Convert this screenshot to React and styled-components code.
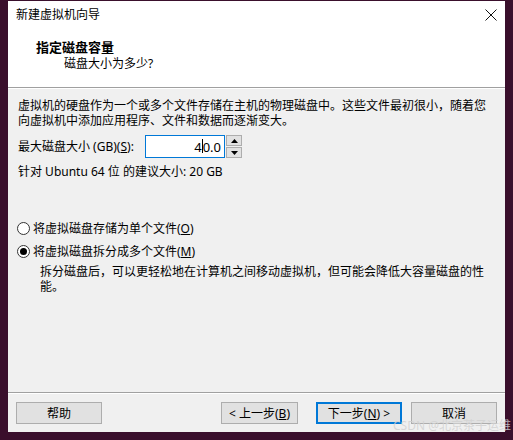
import React from "react";
import styled, { createGlobalStyle } from "styled-components";

const Global = createGlobalStyle`
  html, body { margin: 0; padding: 0; }
  body {
    background: #3a0f2c;
    font-family: "Noto Sans", "Noto Sans CJK SC", sans-serif;
    color: #000;
  }
`;

const Page = styled.div`
  position: relative;
  width: 513px;
  height: 440px;
  padding: 1px 8px 0 8px;
  box-sizing: border-box;
  overflow: hidden;
`;

const Window = styled.div`
  width: 497px;
  height: 431px;
  display: flex;
  flex-direction: column;
  background: #f0f0f0;
  font-size: 12px;
`;

const TitleBar = styled.div`
  height: 28px;
  background: #fff;
  display: flex;
  align-items: center;
  justify-content: space-between;
  padding: 0 8px 0 8px;
`;

const TitleText = styled.span`
  font-size: 12px;
  line-height: 16px;
`;

const Header = styled.div`
  background: #fff;
  height: 59px;
  box-sizing: border-box;
  padding: 9px 0 0 28px;
  border-bottom: 1px solid #a0a0a0;
`;

const HeaderTitle = styled.div`
  font-size: 13px;
  font-weight: bold;
  line-height: 18px;
`;

const HeaderSub = styled.div`
  font-size: 12px;
  line-height: 15px;
  padding-left: 28px;
`;

const Body = styled.div`
  flex: 1;
  padding: 9px 10px 0 10px;
  border-top: 1px solid #fff;
  display: flex;
  flex-direction: column;
`;

const Text = styled.div`
  line-height: 15px;
  margin-top: ${(p) => p.$mt || 0}px;
  margin-left: ${(p) => p.$ml || 0}px;
  white-space: pre;
`;

const Key = styled.span`
  text-decoration: underline;
  text-underline-offset: 1px;
`;

const SizeRow = styled.div`
  display: flex;
  align-items: center;
  margin-top: 7px;
  height: 23px;
`;

const Label = styled.span`
  line-height: 15px;
  width: 127px;
  white-space: nowrap;
`;

const Input = styled.div`
  width: 80px;
  height: 23px;
  box-sizing: border-box;
  border: 1px solid #0078d7;
  background: #fff;
  display: flex;
  align-items: center;
  justify-content: flex-end;
  padding-right: 3px;
  font-size: 13px;
`;

const Caret = styled.span`
  display: inline-block;
  width: 1px;
  height: 14px;
  background: #000;
  vertical-align: middle;
  margin: 0 0 1px 0;
`;

const Spinner = styled.div`
  margin-left: 1px;
  width: 16px;
  height: 23px;
  display: flex;
  flex-direction: column;
  gap: 1px;
`;

const SpinBtn = styled.div`
  flex: 1;
  border: 1px solid #adadad;
  background: #e1e1e1;
  display: flex;
  align-items: center;
  justify-content: center;
`;

const RadioRow = styled.div`
  display: flex;
  align-items: center;
  height: 18px;
  margin-top: ${(p) => p.$mt}px;
  margin-left: -1px;
`;

const RadioCircle = styled.span`
  width: 13px;
  height: 13px;
  box-sizing: border-box;
  border: 1px solid #333;
  border-radius: 50%;
  background: #fff;
  display: flex;
  align-items: center;
  justify-content: center;
  margin-right: 3px;
  &::after {
    content: "";
    width: 7px;
    height: 7px;
    border-radius: 50%;
    background: ${(p) => (p.$checked ? "#000" : "transparent")};
  }
`;

const Footer = styled.div`
  border-top: 1px solid #a0a0a0;
  box-shadow: inset 0 1px 0 #fff;
  padding: 9px 8px 8px 8px;
  display: flex;
  align-items: center;
`;

const Button = styled.div`
  width: ${(p) => p.$w || 86}px;
  height: 22px;
  box-sizing: border-box;
  border: ${(p) => (p.$default ? "2px solid #0078d7" : "1px solid #adadad")};
  background: #e1e1e1;
  display: flex;
  align-items: center;
  justify-content: center;
  font-size: 12px;
  margin-left: ${(p) => p.$ml || 0}px;
  white-space: nowrap;
`;

const Spacer = styled.div`
  flex: 1;
`;

const Watermark = styled.div`
  position: absolute;
  right: 2px;
  bottom: 7px;
  font-size: 12px;
  line-height: 14px;
  color: rgba(210, 210, 210, 0.85);
  font-family: "Noto Sans", "Noto Sans CJK SC", sans-serif;
`;

export default function App() {
  return (
    <Page>
      <Global />
      <Window>
        <TitleBar>
          <TitleText>新建虚拟机向导</TitleText>
          <svg width="12" height="12" viewBox="0 0 12 12">
            <path d="M0.5 0.5 L11.5 11.5 M11.5 0.5 L0.5 11.5" stroke="#111" strokeWidth="1" />
          </svg>
        </TitleBar>
        <Header>
          <HeaderTitle>指定磁盘容量</HeaderTitle>
          <HeaderSub>磁盘大小为多少?</HeaderSub>
        </Header>
        <Body>
          <Text>虚拟机的硬盘作为一个或多个文件存储在主机的物理磁盘中。这些文件最初很小，随着您</Text>
          <Text>向虚拟机中添加应用程序、文件和数据而逐渐变大。</Text>
          <SizeRow>
            <Label>
              最大磁盘大小 (GB)(<Key>S</Key>):
            </Label>
            <Input>
              4<Caret />0.0
            </Input>
            <Spinner>
              <SpinBtn>
                <svg width="7" height="4" viewBox="0 0 7 4">
                  <path d="M3.5 0 L7 4 L0 4 Z" fill="#000" />
                </svg>
              </SpinBtn>
              <SpinBtn>
                <svg width="7" height="4" viewBox="0 0 7 4">
                  <path d="M0 0 L7 0 L3.5 4 Z" fill="#000" />
                </svg>
              </SpinBtn>
            </Spinner>
          </SizeRow>
          <Text $mt={6}>针对 Ubuntu 64 位 的建议大小: 20 GB</Text>
          <RadioRow $mt={40}>
            <RadioCircle />
            <span>
              将虚拟磁盘存储为单个文件(<Key>O</Key>)
            </span>
          </RadioRow>
          <RadioRow $mt={5}>
            <RadioCircle $checked />
            <span>
              将虚拟磁盘拆分成多个文件(<Key>M</Key>)
            </span>
          </RadioRow>
          <Text $mt={4} $ml={22}>拆分磁盘后，可以更轻松地在计算机之间移动虚拟机，但可能会降低大容量磁盘的性</Text>
          <Text $ml={22}>能。</Text>
        </Body>
        <Footer>
          <Button $w={86}>帮助</Button>
          <Spacer />
          <Button $w={77}>
            &lt; 上一步(<Key>B</Key>)
          </Button>
          <Button $w={86} $ml={18} $default>
            下一步(<Key>N</Key>) &gt;
          </Button>
          <Button $w={86} $ml={9}>
            取消
          </Button>
        </Footer>
      </Window>
      <Watermark>CSDN @北京茶子运维</Watermark>
    </Page>
  );
}
